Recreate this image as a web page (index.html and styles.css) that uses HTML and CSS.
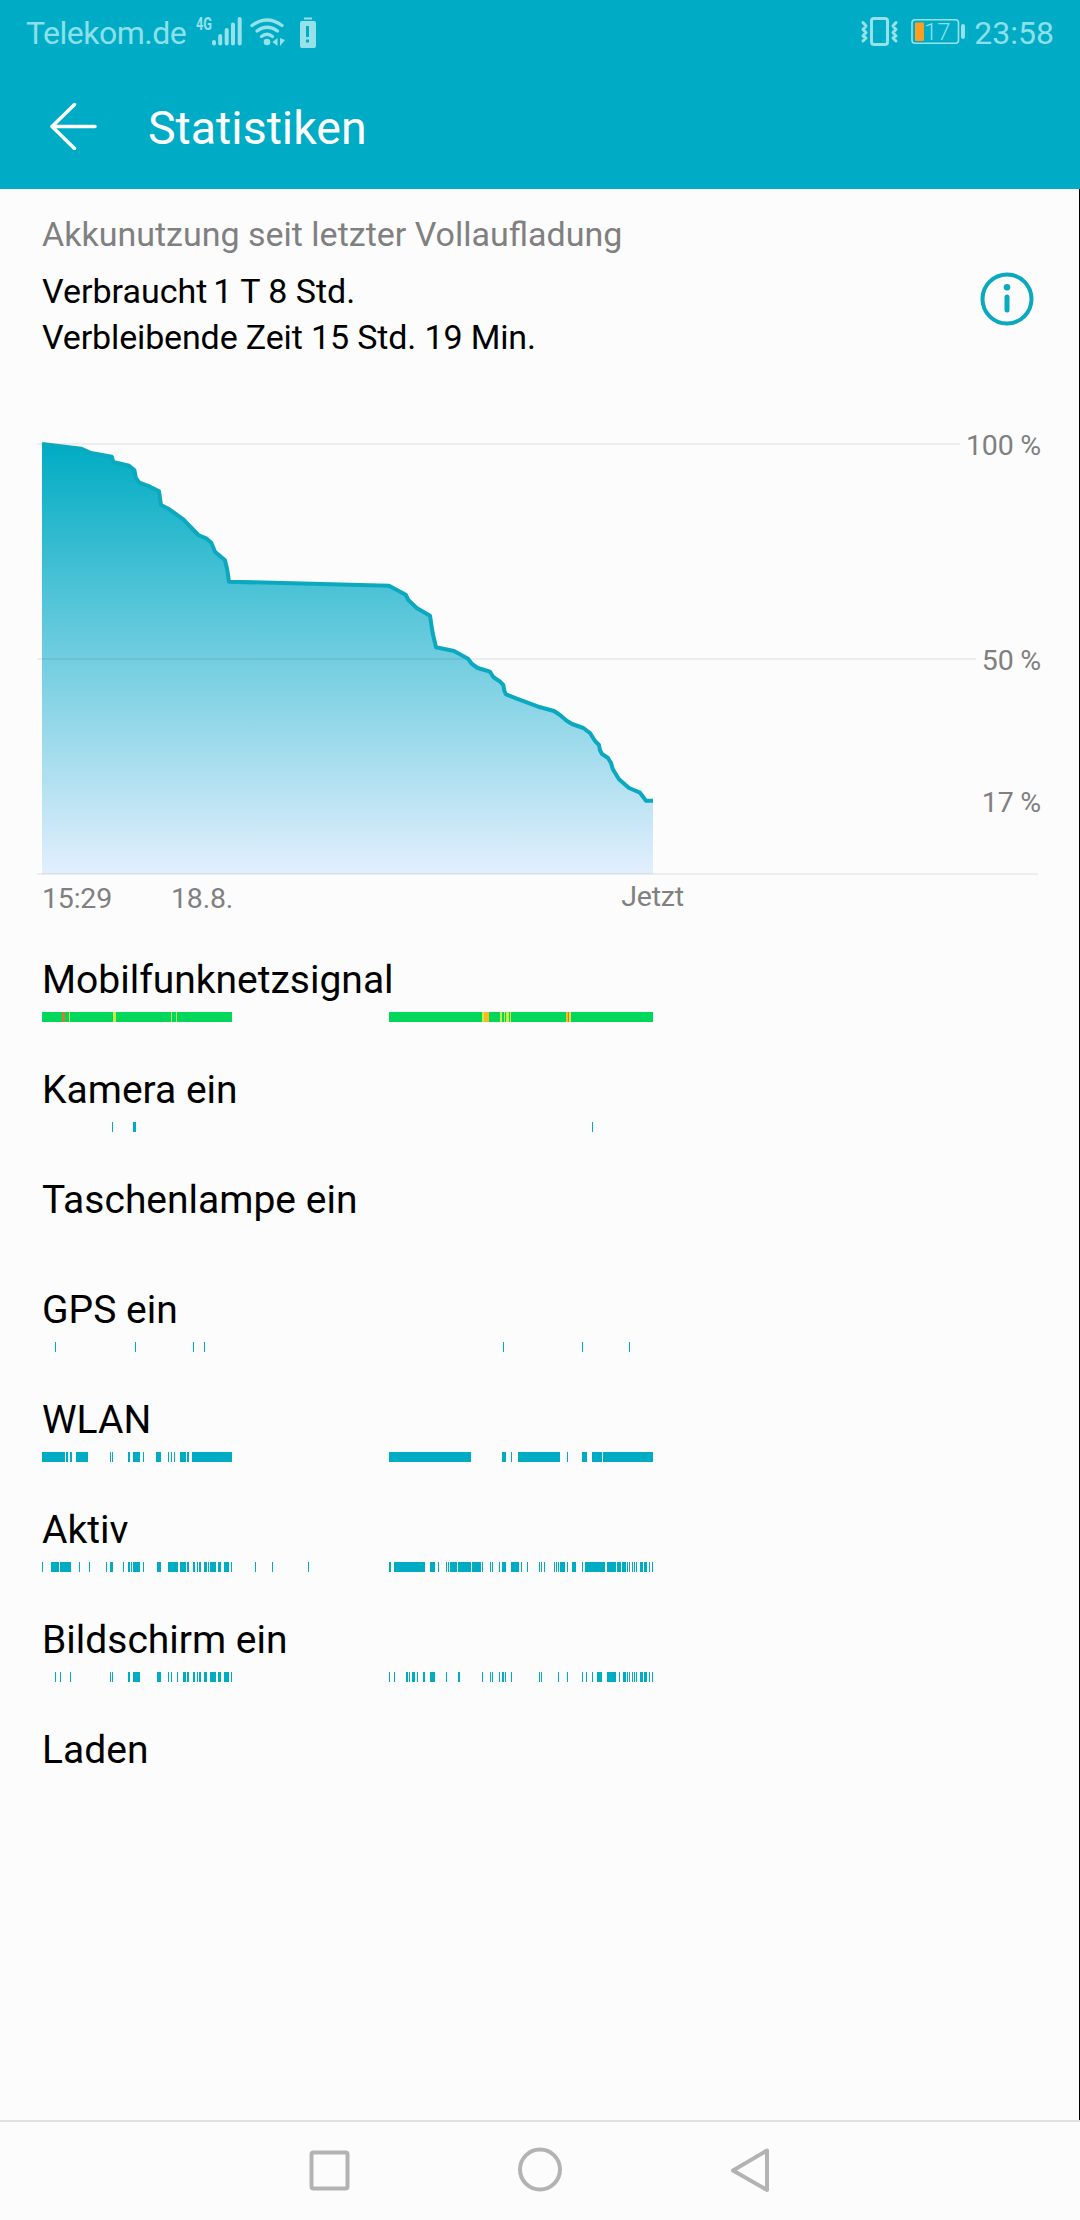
FILE: index.html
```html
<!DOCTYPE html>
<html lang="de">
<head>
    <meta charset="UTF-8">
    <meta name="viewport" content="width=device-width, initial-scale=1.0">
    <title>Statistiken</title>
    <link rel="stylesheet" href="styles.css">
</head>
<body>
    <header class="header">
        <div class="status-bar">
            <div class="status-left">
                <span class="carrier">Telekom.de</span>
                <svg class="status-icons" width="124" height="36" viewBox="194 14 124 36">
                    <text class="network" x="196" y="30" textLength="16" lengthAdjust="spacingAndGlyphs">4G</text>
                    <path class="line" stroke-width="4" d="M214 42v1.5M220.200 36v7.500M226.700 30v13.500M233 24.500v19M239.700 19v24.500"/>
                    <g class="line" stroke-width="3.300">
                        <path d="M252 25.500Q267 14.500 282 25.500"/>
                        <path d="M257 31Q267 23.500 277.500 31"/>
                        <path d="M261.500 36.500Q267 32 272.500 36.500"/>
                    </g>
                    <circle class="solid" cx="267" cy="42" r="3.300"/>
                    <path class="solid" d="M277.500 38v8l-5-4zM280 38v8l5-6z"/>
                    <path class="solid" fill-rule="evenodd" d="M304 17.500h8v2h-8zM302 21h12q2 0 2 2v23q0 2-2 2h-12q-2 0-2-2v-23q0-2 2-2zM306 26v11h3v-11zM306 39.500v3h3v-3z"/>
                </svg>
            </div>
            <div class="status-right">
                <svg class="status-icons" width="108" height="36" viewBox="860 14 108 36">
                    <rect class="line" x="871.500" y="18.500" width="16" height="26" rx="2.500" stroke-width="3"/>
                    <path class="line" stroke-width="3" d="M863 22.500l3 3.500-3 3.500 3 3-3 3.500 3 2-3 3M896 22.500l-3 3.500 3 3.500-3 3 3 3.500-3 2 3 3"/>
                    <rect class="line" x="912" y="19.700" width="46.500" height="23.500" rx="3" stroke-width="1.600"/>
                    <rect class="charge" x="915" y="22.500" width="9" height="18.500" rx="1"/>
                    <path class="line" stroke-width="4" d="M963 26v11"/>
                    <text class="percent" x="924" y="40.300">17</text>
                </svg>
                <span class="clock">23:58</span>
            </div>
        </div>
        <div class="app-bar">
            <svg class="back" width="48" height="48" viewBox="49 102 48 48">
                <path d="M95 126.500H52M74.500 104.500L52 126.500L74.500 148.500"/>
            </svg>
            <h1>Statistiken</h1>
        </div>
    </header>

    <main class="content">
        <section class="summary">
            <div>
                <h2>Akkunutzung seit letzter Vollaufladung</h2>
                <p class="used"><span>Verbraucht</span><span>1 T 8 Std.</span></p>
                <p class="remaining">Verbleibende Zeit 15 Std. 19 Min.</p>
            </div>
            <svg class="info" width="54" height="54" viewBox="0 0 54 54">
                <circle class="ring" cx="27" cy="27" r="24.500"/>
                <circle class="dot" cx="27" cy="15.300" r="3.300"/>
                <path class="stem" d="M27 25v13"/>
            </svg>
        </section>

        <svg class="chart" width="1010" height="490" viewBox="37 430 1010 490">
            <defs>
                <linearGradient id="level" gradientUnits="userSpaceOnUse" x1="0" y1="444" x2="0" y2="874">
                    <stop offset="0" stop-color="#00acc3"/>
                    <stop offset="1" stop-color="#e3effd"/>
                </linearGradient>
            </defs>
            <path fill="url(#level)" d="M42 444L81 448.700L91 453L111.700 456.700L113.300 462L129 465.700L134.300 470L136 478.300L139.300 482.700L150 486.700L159 491.300L161 505L169.300 509.300L183.300 519.300L198.300 535L206.700 538.700L211.300 542.700L215 551.700L225 560.300L227.300 570L229 581.700L389 585.700L405.700 594.700L408.300 600L416.700 608L430 615.700L432.700 633.300L436 647.300L454 651L468 658.700L472 664L477.700 668L490 671.700L493.300 677L500 681.700L503.300 685L504.300 690.700L506 694.300L516.700 698.700L538.300 706.700L554 711L560 715L566.700 720.700L572 724L583.300 728L590 733L595 741L599 745L600 750.300L602 754L608 758L611 763L612.700 769L619 779.300L629 788L640 792.700L646 800.700H653V874H42z"/>
            <path class="grid" d="M37 444H960M37 659H976M37 874H1038"/>
            <path class="curve" d="M42 444L81 448.700L91 453L111.700 456.700L113.300 462L129 465.700L134.300 470L136 478.300L139.300 482.700L150 486.700L159 491.300L161 505L169.300 509.300L183.300 519.300L198.300 535L206.700 538.700L211.300 542.700L215 551.700L225 560.300L227.300 570L229 581.700L389 585.700L405.700 594.700L408.300 600L416.700 608L430 615.700L432.700 633.300L436 647.300L454 651L468 658.700L472 664L477.700 668L490 671.700L493.300 677L500 681.700L503.300 685L504.300 690.700L506 694.300L516.700 698.700L538.300 706.700L554 711L560 715L566.700 720.700L572 724L583.300 728L590 733L595 741L599 745L600 750.300L602 754L608 758L611 763L612.700 769L619 779.300L629 788L640 792.700L646 800.700H653"/>
            <g class="axis">
                <text class="end" x="1041" y="455">100 %</text>
                <text class="end" x="1041" y="670">50 %</text>
                <text class="end" x="1041" y="812">17 %</text>
                <text x="42" y="908">15:29</text>
                <text x="171" y="908">18.8.</text>
                <text class="middle" x="652.500" y="906">Jetzt</text>
            </g>
        </svg>

        <ul class="rows">
            <li class="row">
                <span>Mobilfunknetzsignal</span>
                <svg class="bar" width="611" height="10">
                    <path class="good" d="M0 5h190M347 5h264"/>
                    <path class="fair" d="M27 5h1M71 5h3M129 5h1M134 5h1M440 5h2M458 5h2M462 5h1M464 5h3M468 5h1M527 5h2"/>
                    <path class="weak" d="M442 5h5M524 5h2"/>
                    <path class="poor" d="M20 5h3M526 5h1"/>
                </svg>
            </li>
            <li class="row">
                <span>Kamera ein</span>
                <svg class="bar" width="611" height="10">
                    <path d="M70 5h1M91 5h3M550 5h1"/>
                </svg>
            </li>
            <li class="row">
                <span>Taschenlampe ein</span>
                <svg class="bar" width="611" height="10"></svg>
            </li>
            <li class="row">
                <span>GPS ein</span>
                <svg class="bar" width="611" height="10">
                    <path d="M13 5h1M93 5h1M151 5h1M162 5h1M461 5h1M540 5h1M587 5h1"/>
                </svg>
            </li>
            <li class="row">
                <span>WLAN</span>
                <svg class="bar" width="611" height="10">
                    <path d="M0 5h23M24 5h2M28 5h2M34 5h12M68 5h1M70 5h1M86 5h2M91 5h7M101 5h1M114 5h5M126 5h1M129 5h1M132 5h1M138 5h6M145 5h2M150 5h40"/>
                    <path d="M347 5h82M460 5h4M469 5h1M476 5h42M525 5h1M540 5h5M550 5h10M561 5h50"/>
                </svg>
            </li>
            <li class="row">
                <span>Aktiv</span>
                <svg class="bar" width="611" height="10">
                    <path d="M0 5h1M9 5h8M18 5h11M37 5h1M47 5h1M64 5h1M68 5h3M81 5h1M86 5h2M89 5h1M91 5h7M101 5h1M115 5h4M126 5h10M138 5h6M145 5h2M151 5h2M155 5h1M157 5h2M162 5h3M166 5h1M168 5h6M176 5h3M182 5h5M189 5h1M213 5h1M230 5h1M266 5h1"/>
                    <path d="M347 5h2M352 5h31M388 5h5M396 5h1M404 5h1M406 5h1M408 5h7M416 5h13M430 5h9M440 5h1M448 5h1M450 5h1M457 5h1M460 5h4M469 5h8M479 5h1M485 5h1M497 5h1M499 5h1M502 5h1M512 5h1M514 5h1M516 5h1M518 5h5M525 5h1M530 5h4M540 5h1M543 5h20M565 5h9M575 5h4M580 5h4M585 5h1M587 5h1M590 5h1M592 5h1M594 5h1M598 5h3M602 5h3M607 5h1M610 5h1"/>
                </svg>
            </li>
            <li class="row">
                <span>Bildschirm ein</span>
                <svg class="bar" width="611" height="10">
                    <path d="M13 5h1M18 5h1M28 5h1M68 5h1M70 5h1M86 5h2M91 5h7M115 5h4M126 5h1M129 5h1M135 5h1M141 5h3M145 5h2M151 5h2M155 5h1M157 5h2M162 5h3M168 5h6M176 5h3M182 5h5M189 5h1"/>
                    <path d="M347 5h1M352 5h1M364 5h2M367 5h1M370 5h3M375 5h1M381 5h2M388 5h5M404 5h1M416 5h2M440 5h1M448 5h1M450 5h1M457 5h1M460 5h2M463 5h1M469 5h1M497 5h1M499 5h1M516 5h1M525 5h1M540 5h1M544 5h1M550 5h1M555 5h5M565 5h9M577 5h1M581 5h3M585 5h1M587 5h1M590 5h1M592 5h1M594 5h1M598 5h3M602 5h3M607 5h1M610 5h1"/>
                </svg>
            </li>
            <li class="row">
                <span>Laden</span>
                <svg class="bar" width="611" height="10"></svg>
            </li>
        </ul>
    </main>

    <nav class="nav-bar">
        <svg width="48" height="48" viewBox="0 0 48 48"><rect x="6.500" y="6.500" width="36" height="36" rx="2"/></svg>
        <svg width="48" height="48" viewBox="0 0 48 48"><circle cx="24" cy="23.500" r="20"/></svg>
        <svg width="48" height="48" viewBox="0 0 48 48"><path d="M40 4.500L6 24.500L40 44z"/></svg>
    </nav>
</body>
</html>
```
FILE: styles.css
```css
* {
    box-sizing: border-box;
}
body {
    margin: 0;
    height: 2220px;
    display: flex;
    flex-direction: column;
    font-family: Roboto, sans-serif;
    background-color: #fcfcfc;
    color: #000;
}
h1, h2, p, ul {
    margin: 0;
    padding: 0;
    font-weight: normal;
}
svg {
    display: block;
    flex: none;
}
.header {
    height: 189px;
    background-color: #00acc5;
}
.status-bar {
    height: 66px;
    padding: 0 26px;
    display: flex;
    justify-content: space-between;
    color: #8ce0ea;
    font-size: 32px;
    line-height: 66px;
}
.status-left, .status-right {
    display: flex;
}
.carrier {
    width: 168px;
    letter-spacing: -0.5px;
}
.status-right {
    gap: 6px;
}
.status-icons {
    margin-top: 14px;
}
.status-icons .line {
    fill: none;
    stroke: #96e1ea;
    stroke-linecap: round;
    stroke-linejoin: round;
}
.status-icons .solid {
    fill: #96e1ea;
}
.network {
    fill: #96e1ea;
    font-size: 18px;
    font-weight: bold;
}
.percent {
    fill: #8ce0ea;
    font-size: 24px;
    font-weight: 300;
}
.charge {
    fill: #ff9d1e;
}
.app-bar {
    height: 123px;
    padding-left: 49px;
    display: flex;
    gap: 51px;
}
.back {
    margin-top: 36px;
    fill: none;
    stroke: #fff;
    stroke-width: 3.5px;
    stroke-linecap: round;
    stroke-linejoin: round;
}
h1 {
    font-size: 46.5px;
    line-height: 124px;
    color: #fff;
}
.content {
    flex: 1;
    border-right: 1px solid #000;
}
.summary {
    height: 241px;
    padding: 22px 45px 0 42px;
    display: flex;
    justify-content: space-between;
    font-size: 34px;
    line-height: 46px;
}
h2 {
    font-size: 34px;
    color: #808080;
    margin-bottom: 11px;
}
.used span + span {
    margin-left: 6px;
}
.remaining {
    letter-spacing: -0.14px;
}
.info {
    margin-top: 61px;
    fill: #0aa9bd;
}
.info .ring, .info .stem {
    fill: none;
    stroke: #0aa9bd;
    stroke-width: 4px;
    stroke-linecap: round;
}
.info .stem {
    stroke-width: 5px;
}
.chart {
    margin-left: 37px;
}
.grid {
    fill: none;
    stroke: rgba(0, 0, 0, 0.06);
    stroke-width: 2px;
}
.curve {
    fill: none;
    stroke: #0aa9bf;
    stroke-width: 4px;
    stroke-linejoin: round;
}
.axis {
    font-size: 28.5px;
    letter-spacing: -0.2px;
    fill: #808080;
}
.axis .end {
    text-anchor: end;
}
.axis .middle {
    text-anchor: middle;
}
.rows {
    padding: 33px 0 0 42px;
    list-style: none;
}
.row {
    height: 110px;
    font-size: 39px;
    line-height: 54px;
}
.row span {
    display: block;
}
.bar {
    margin-top: 5px;
    shape-rendering: crispEdges;
}
.bar path {
    fill: none;
    stroke: #00acc3;
    stroke-width: 10px;
}
.bar .good {
    stroke: #00d75b;
}
.bar .fair {
    stroke: #cdea45;
}
.bar .weak {
    stroke: #fbb924;
}
.bar .poor {
    stroke: #d57a32;
}
.nav-bar {
    height: 100px;
    padding: 24px 305px 0;
    border-top: 2px solid #e1e1e1;
    display: flex;
    justify-content: space-between;
}
.nav-bar svg {
    fill: none;
    stroke: #b3b3b3;
    stroke-width: 4px;
    stroke-linejoin: round;
}
```
